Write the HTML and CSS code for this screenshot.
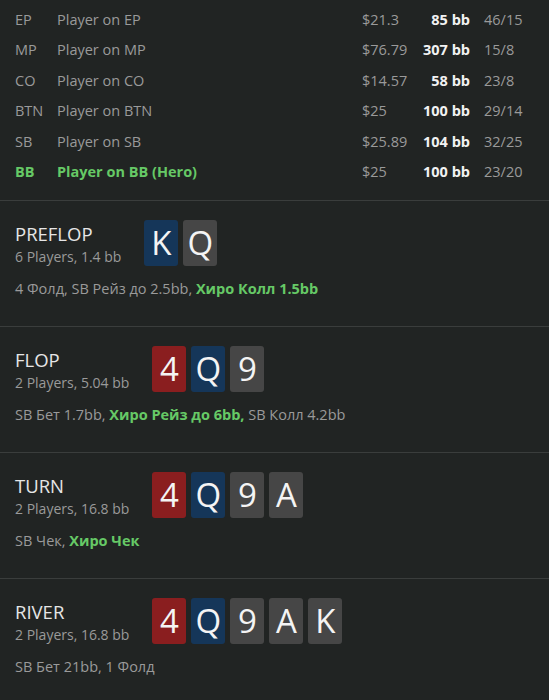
FILE: index.html
```html
<!DOCTYPE html>
<html>
<head>
    <title>Hand History</title>
    <link rel="stylesheet" href="styles.css">
</head>
<body>
    <div class="players">
        <div class="row"><span class="pos">EP</span><span class="name">Player on EP</span><span class="money">$21.3</span><span class="stack">85 bb</span><span class="ratio">46/15</span></div>
        <div class="row"><span class="pos">MP</span><span class="name">Player on MP</span><span class="money">$76.79</span><span class="stack">307 bb</span><span class="ratio">15/8</span></div>
        <div class="row"><span class="pos">CO</span><span class="name">Player on CO</span><span class="money">$14.57</span><span class="stack">58 bb</span><span class="ratio">23/8</span></div>
        <div class="row"><span class="pos">BTN</span><span class="name">Player on BTN</span><span class="money">$25</span><span class="stack">100 bb</span><span class="ratio">29/14</span></div>
        <div class="row"><span class="pos">SB</span><span class="name">Player on SB</span><span class="money">$25.89</span><span class="stack">104 bb</span><span class="ratio">32/25</span></div>
        <div class="row hero"><span class="pos">BB</span><span class="name">Player on BB (Hero)</span><span class="money">$25</span><span class="stack">100 bb</span><span class="ratio">23/20</span></div>
    </div>

    <div class="street">
        <div class="street-head">
            <div class="street-info">
                <div class="street-title">PREFLOP</div>
                <div class="street-sub">6 Players, 1.4 bb</div>
            </div>
            <div class="cards">
                <span class="card blue">K</span>
                <span class="card gray">Q</span>
            </div>
        </div>
        <div class="actions">4 Фолд, SB Рейз до 2.5bb, <b class="hero-act">Хиро Колл 1.5bb</b></div>
    </div>

    <div class="street">
        <div class="street-head">
            <div class="street-info">
                <div class="street-title">FLOP</div>
                <div class="street-sub">2 Players, 5.04 bb</div>
            </div>
            <div class="cards">
                <span class="card red">4</span>
                <span class="card blue">Q</span>
                <span class="card gray">9</span>
            </div>
        </div>
        <div class="actions">SB Бет 1.7bb, <b class="hero-act">Хиро Рейз до 6bb,</b> SB Колл 4.2bb</div>
    </div>

    <div class="street">
        <div class="street-head">
            <div class="street-info">
                <div class="street-title">TURN</div>
                <div class="street-sub">2 Players, 16.8 bb</div>
            </div>
            <div class="cards">
                <span class="card red">4</span>
                <span class="card blue">Q</span>
                <span class="card gray">9</span>
                <span class="card gray">A</span>
            </div>
        </div>
        <div class="actions">SB Чек, <b class="hero-act">Хиро Чек</b></div>
    </div>

    <div class="street">
        <div class="street-head">
            <div class="street-info">
                <div class="street-title">RIVER</div>
                <div class="street-sub">2 Players, 16.8 bb</div>
            </div>
            <div class="cards">
                <span class="card red">4</span>
                <span class="card blue">Q</span>
                <span class="card gray">9</span>
                <span class="card gray">A</span>
                <span class="card gray">K</span>
            </div>
        </div>
        <div class="actions">SB Бет 21bb, 1 Фолд</div>
    </div>
</body>
</html>
```

FILE: styles.css
```css
body {
    margin: 0;
    background: #212423;
    color: #9a9a9a;
    font-family: "Open Sans", "Noto Sans", sans-serif;
}

.players {
    padding: 4px 15px 13px;
}

.row {
    display: grid;
    grid-template-columns: 42px 1fr 52px 56px 64px;
    height: 30.5px;
    align-items: center;
    font-size: 14.5px;
}

.stack {
    text-align: right;
    color: #f2f2f2;
    font-weight: 700;
}

.ratio {
    padding-left: 14px;
}

.hero .pos,
.hero .name {
    color: #66c966;
    font-weight: 700;
}

.street {
    border-top: 1px solid #3a3d3c;
    padding: 19px 15px 26px;
}

.street-head {
    display: flex;
    align-items: flex-start;
    gap: 23px;
}

.street-info {
    margin-top: 2px;
}

.street-title {
    color: #e6e6e6;
    font-size: 18.5px;
    line-height: 24px;
}

.street-sub {
    font-size: 14px;
    line-height: 22px;
}

.cards {
    display: flex;
    gap: 5px;
}

.card {
    width: 34px;
    height: 46px;
    border-radius: 3px;
    display: flex;
    align-items: center;
    justify-content: center;
    color: #f4f4f4;
    font-size: 33px;
    line-height: 46px;
}

.red {
    background: #8a1e1f;
}

.blue {
    background: #153659;
}

.gray {
    background: #464646;
}

.actions {
    margin-top: 10px;
    font-size: 14.5px;
    line-height: 22px;
}

.hero-act {
    color: #66c966;
    font-weight: 700;
}
```
